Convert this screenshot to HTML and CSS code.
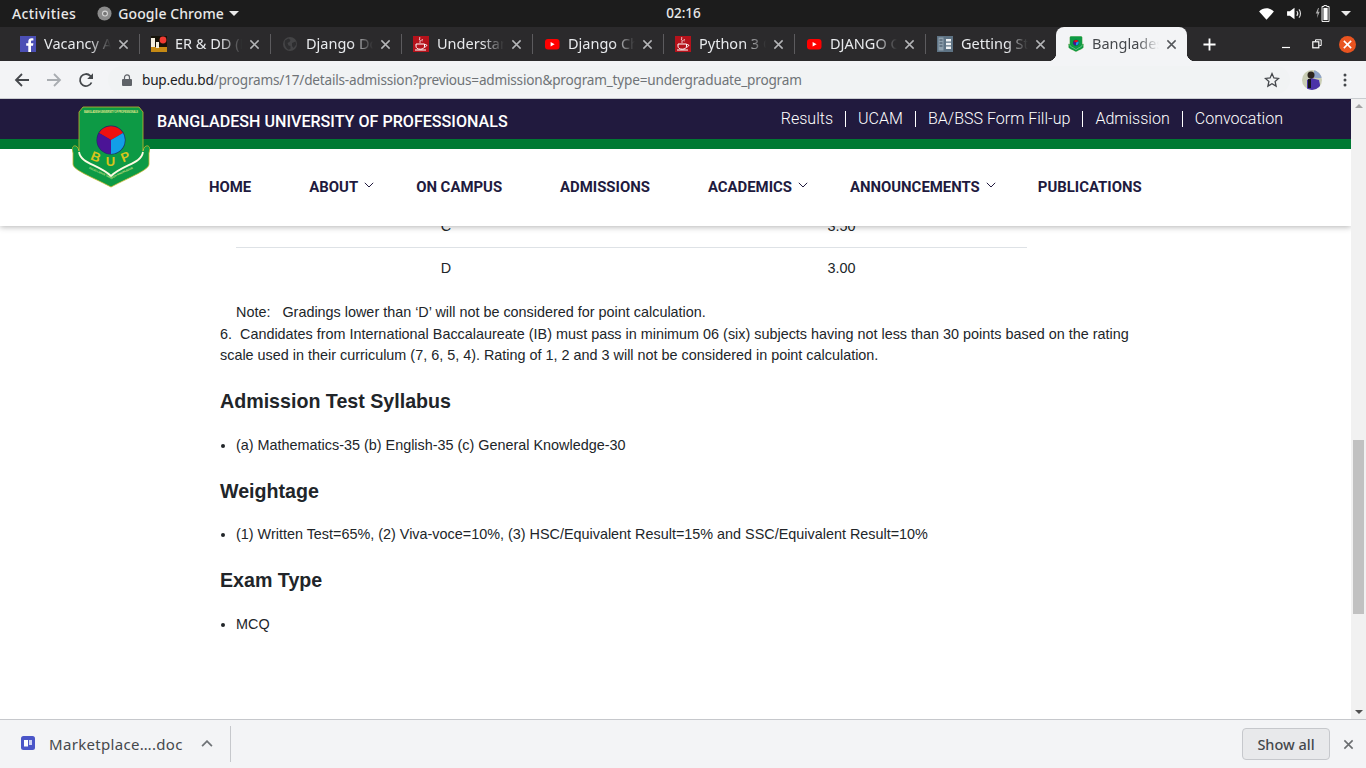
FILE: index.html
```html
<!DOCTYPE html>
<html lang="en">
<head>
<meta charset="utf-8">
<title>Bangladesh University of Professionals</title>
<link rel="stylesheet" href="styles.css">
</head>
<body>
<svg class="defs" width="0" height="0" aria-hidden="true">
  <symbol id="x" viewBox="0 0 12 12"><path d="M1.500 1.500l9 9M10.500 1.500l-9 9" fill="none" stroke="currentColor" stroke-width="1.600"/></symbol>
  <symbol id="yt" viewBox="0 0 16 16"><rect x="1" y="3" width="14.500" height="10.500" rx="3" fill="#f00"/><path d="M6.600 5.900v4.700l4-2.350z" fill="#fff"/></symbol>
  <symbol id="cup" viewBox="0 0 16 16"><rect width="16" height="16" fill="#b5121b"/><path d="M3 8h8.500v2.200c0 1.800-1.600 3-4.200 3S3 12 3 10.200zM11.500 8.600c2-.3 2.600.5 2 1.400-.5.700-1.400 1-2.400 1.100M2 14h11" fill="none" stroke="#fff" stroke-width="1"/><path d="M6.500 1.200c1.300 1-1 1.800.3 2.800s-.6 1.600.3 2.800M9 3c.8.700-.6 1.300.2 2.300" fill="none" stroke="#fff" stroke-width=".9"/></symbol>
  <symbol id="shield" viewBox="0 0 78 82">
    <path d="M11 1H67L71 6V45C72 39 77 38 78 43L77 47V58C77 64 60 70 39 81C18 70 1 64 1 58V47L0 43C1 38 6 39 7 45V6Z" fill="#0d9a45" stroke="#c8b52c" stroke-width=".8"/>
    <path d="M7 46C9 58 26 58 39 70C52 58 69 58 71 46" fill="none" stroke="#fdfbe2" stroke-width="1.800"/>
    <circle cx="39" cy="34" r="14.500" fill="#1f2a6a"/>
    <path d="M39 34L27 27A14 14 0 0 1 51 27Z" fill="#f01010"/>
    <path d="M39 34L51 27A14 14 0 0 1 39 48Z" fill="#129fe8"/>
    <path d="M39 34V48A14 14 0 0 1 27 27Z" fill="#4b1496"/>
  </symbol>
</svg>

<div class="topbar">
  <div class="topbar-left">
    <span class="activities">Activities</span>
    <span class="app">
      <svg class="app-icon" viewBox="0 0 16 16"><circle cx="8" cy="8" r="7.500" fill="#8b8b8b"/><circle cx="8.500" cy="8" r="3.200" fill="#d5d5d5"/><circle cx="8.500" cy="8" r="2" fill="#777"/></svg>
      Google Chrome
      <i class="caret"></i>
    </span>
  </div>
  <span class="clock">02:16</span>
  <div class="status">
    <svg class="st-wifi" viewBox="0 0 16 13"><path d="M0 3.800C4.500-.9 11.500-.9 16 3.800L8 12.800z" fill="#fff"/></svg>
    <svg class="st-vol" viewBox="0 0 16 14"><path d="M0 4.500h3L8 .8v12.400L3 9.500H0z" fill="#fff"/><path d="M10.500 4.300c1.200 1.500 1.200 3.900 0 5.400M12.800 2.500c2.200 2.500 2.200 6.500 0 9" fill="none" stroke="#ddd" stroke-width="1.200"/></svg>
    <svg class="st-bat" viewBox="0 0 16 18"><path d="M3.300 3L.8 9h2l-.8 5 3-7H3.200l1-4z" fill="#aaa"/><path d="M9.500 1.500V.5h3v1h2.500v16H7.500v-16z" fill="none" stroke="#fff" stroke-width="1"/><rect x="9" y="3" width="4.500" height="13" fill="#fff"/></svg>
    <i class="caret"></i>
  </div>
</div>

<div class="tabstrip">
  <div class="tab">
    <span class="sep sep-none"></span>
    <svg class="fav" viewBox="0 0 16 16"><rect width="16" height="16" fill="#4b4fb5"/><path d="M11 16V9.800h2l.4-2.500H11V5.800c0-.8.300-1.200 1.200-1.200h1.200V2.400C13 2.300 12.300 2.200 11.500 2.200 9.500 2.200 8.300 3.400 8.300 5.500v1.800H6.200v2.500h2.100V16z" fill="#fff"/></svg>
    <span class="tab-title">Vacancy Announcement</span>
    <svg class="close"><use href="#x"/></svg>
  </div>
  <div class="tab">
    <span class="sep"></span>
    <svg class="fav" viewBox="0 0 16 16"><rect width="16" height="16" fill="#161208"/><rect x="0" y="2" width="4" height="9" fill="#f4efe0"/><rect x="0" y="11" width="16" height="5" fill="#c68a14"/><rect x="5" y="6" width="3" height="6" fill="#f4efe0"/><circle cx="12" cy="4" r="3.400" fill="#ee3a32"/></svg>
    <span class="tab-title">ER &amp; DD (Entity</span>
    <svg class="close"><use href="#x"/></svg>
  </div>
  <div class="tab">
    <span class="sep"></span>
    <svg class="fav" viewBox="0 0 16 16"><circle cx="8" cy="8" r="7" fill="#444446"/><path d="M3 4.500l3.500-2 2 1.500-1 2-2 1 1 2.500 2 .5v3l-2 .8C4 12 2 9 3 4.500zM10 7l3.500-1.500.8 3L11.500 12 10 10z" fill="#2e2e30"/></svg>
    <span class="tab-title">Django Documentation</span>
    <svg class="close"><use href="#x"/></svg>
  </div>
  <div class="tab">
    <span class="sep"></span>
    <svg class="fav"><use href="#cup"/></svg>
    <span class="tab-title">Understanding</span>
    <svg class="close"><use href="#x"/></svg>
  </div>
  <div class="tab">
    <span class="sep"></span>
    <svg class="fav"><use href="#yt"/></svg>
    <span class="tab-title">Django Channels</span>
    <svg class="close"><use href="#x"/></svg>
  </div>
  <div class="tab">
    <span class="sep"></span>
    <svg class="fav"><use href="#cup"/></svg>
    <span class="tab-title">Python 3 Cookbook</span>
    <svg class="close"><use href="#x"/></svg>
  </div>
  <div class="tab">
    <span class="sep"></span>
    <svg class="fav"><use href="#yt"/></svg>
    <span class="tab-title">DJANGO CRUD</span>
    <svg class="close"><use href="#x"/></svg>
  </div>
  <div class="tab">
    <span class="sep"></span>
    <svg class="fav" viewBox="0 0 16 16"><rect width="16" height="16" fill="#5e7384"/><rect x="1.500" y="1.500" width="5" height="13" fill="#8ea0ad"/><path d="M9 3h5v2.500H9zM9 6.800h5v2.500H9zM9 10.600h5v2.500H9z" fill="#eef1f3"/><path d="M2.500 4h3M2.500 7h3M2.500 10h3" stroke="#39495a" stroke-width="1"/></svg>
    <span class="tab-title">Getting Started</span>
    <svg class="close"><use href="#x"/></svg>
  </div>
  <div class="tab tab-active">
    <span class="sep sep-none"></span>
    <svg class="fav"><use href="#shield"/></svg>
    <span class="tab-title">Bangladesh University</span>
    <svg class="close"><use href="#x"/></svg>
  </div>
  <svg class="newtab" viewBox="0 0 14 14"><path d="M7 .5v13M.5 7h13" stroke="#fff" stroke-width="2" fill="none"/></svg>
  <div class="winctl">
    <svg class="win-min" viewBox="0 0 10 10"><path d="M1 8.500h8" stroke="#fff" stroke-width="1.200"/></svg>
    <svg class="win-max" viewBox="0 0 10 10"><path d="M3.500 2.500V.8h5.700v5.700H7.300" fill="none" stroke="#fff" stroke-width="1"/><rect x=".8" y="2.800" width="6" height="6" fill="none" stroke="#fff" stroke-width="1.200"/></svg>
    <span class="win-close"><svg viewBox="0 0 12 12"><path d="M2 2l8 8M10 2l-8 8" stroke="#fff" stroke-width="1.700" fill="none"/></svg></span>
  </div>
</div>

<div class="toolbar">
  <svg class="nav-btn" viewBox="0 0 16 16"><path d="M15 8H2M8 2L2 8l6 6" fill="none" stroke="#45484c" stroke-width="1.800"/></svg>
  <svg class="nav-btn" viewBox="0 0 16 16"><path d="M1 8h13M8 2l6 6-6 6" fill="none" stroke="#a9adb1" stroke-width="1.800"/></svg>
  <svg class="nav-btn" viewBox="0 0 16 16"><path d="M13.500 10.500A6 6 0 1 1 12.300 3.800L14.500 6" fill="none" stroke="#45484c" stroke-width="1.800"/><path d="M15 1.200V7H9.200z" fill="#45484c"/></svg>
  <div class="omnibox">
    <svg class="lock" viewBox="0 0 10 12"><path d="M2.500 5V3.400a2.500 2.500 0 0 1 5 0V5" fill="none" stroke="#5f6368" stroke-width="1.200"/><rect y="5" width="10" height="7" rx="1" fill="#5f6368"/></svg>
    <span class="url"><b>bup.edu.bd</b>/programs/17/details-admission?previous=admission&amp;program_type=undergraduate_program</span>
    <svg class="star" viewBox="0 0 16 16"><path d="M8 1.600l1.900 4.300 4.700.5-3.500 3.100 1 4.600L8 11.700l-4.100 2.400 1-4.600L1.400 6.400l4.700-.5z" fill="none" stroke="#45484c" stroke-width="1.300"/></svg>
  </div>
  <svg class="avatar" viewBox="0 0 20 20"><defs><clipPath id="av"><circle cx="10" cy="10" r="10"/></clipPath></defs><g clip-path="url(#av)"><rect width="20" height="20" fill="#c9cdb4"/><rect x="12" y="0" width="8" height="8" fill="#8fa4c8"/><path d="M5 20V10l4-2 8 2 2 10z" fill="#4b33a8"/><circle cx="9" cy="5" r="3.500" fill="#2d241e"/><rect x="6" y="9" width="3" height="9" fill="#15151c"/></g></svg>
  <svg class="menu" viewBox="0 0 4 14"><circle cx="2" cy="2" r="1.500" fill="#45484c"/><circle cx="2" cy="7" r="1.500" fill="#45484c"/><circle cx="2" cy="12" r="1.500" fill="#45484c"/></svg>
</div>

<main class="viewport">
  <div class="page">
    <div class="content">
      <table class="grades">
        <tr><td>C</td><td>3.50</td></tr>
        <tr><td>D</td><td>3.00</td></tr>
      </table>
      <p class="note">Note:&nbsp;&nbsp; Gradings lower than ‘D’ will not be considered for point calculation.</p>
      <p class="para">6.&nbsp; Candidates from International Baccalaureate (IB) must pass in minimum 06 (six) subjects having not less than 30 points based on the rating scale used in their curriculum (7, 6, 5, 4). Rating of 1, 2 and 3 will not be considered in point calculation.</p>
      <h4>Admission Test Syllabus</h4>
      <ul><li>(a) Mathematics-35 (b) English-35 (c) General Knowledge-30</li></ul>
      <h4>Weightage</h4>
      <ul><li>(1) Written Test=65%, (2) Viva-voce=10%, (3) HSC/Equivalent Result=15% and SSC/Equivalent Result=10%</li></ul>
      <h4>Exam Type</h4>
      <ul><li>MCQ</li></ul>
    </div>
    <header class="site-header">
      <div class="band">
        <span class="uni">BANGLADESH UNIVERSITY OF PROFESSIONALS</span>
        <nav class="quick">
          <a>Results</a><a>UCAM</a><a>BA/BSS Form Fill-up</a><a>Admission</a><a>Convocation</a>
        </nav>
      </div>
      <div class="stripe"></div>
      <nav class="mainnav">
        <a>HOME</a>
        <a>ABOUT<svg class="chev" viewBox="0 0 10 6"><path d="M.8.8L5 5l4.200-4.200" fill="none" stroke="#211a3e" stroke-width="1"/></svg></a>
        <a>ON CAMPUS</a>
        <a>ADMISSIONS</a>
        <a>ACADEMICS<svg class="chev" viewBox="0 0 10 6"><path d="M.8.8L5 5l4.200-4.200" fill="none" stroke="#211a3e" stroke-width="1"/></svg></a>
        <a>ANNOUNCEMENTS<svg class="chev" viewBox="0 0 10 6"><path d="M.8.8L5 5l4.200-4.200" fill="none" stroke="#211a3e" stroke-width="1"/></svg></a>
        <a>PUBLICATIONS</a>
      </nav>
      <svg class="logo" viewBox="0 0 78 82">
        <use href="#shield" width="78" height="82"/>
        <defs><path id="motto" d="M9 59C20 64 30 68 39 73C48 68 58 64 69 59"/></defs>
        <text class="bup-letter" transform="translate(22 55) rotate(22)" text-anchor="middle">B</text>
        <text class="bup-letter" x="38.500" y="60" text-anchor="middle">U</text>
        <text class="bup-letter" transform="translate(55 55) rotate(-22)" text-anchor="middle">P</text>
        <text class="bup-tiny" x="39" y="7" text-anchor="middle" textLength="54">BANGLADESH UNIVERSITY OF PROFESSIONALS</text>
        <text class="bup-tiny"><textPath href="#motto" startOffset="50%" text-anchor="middle">EXCELLENCE THROUGH KNOWLEDGE</textPath></text>
      </svg>
    </header>
  </div>
  <div class="scrollbar">
    <i class="arrow-up"></i>
    <div class="track"><div class="thumb"></div></div>
    <i class="arrow-down"></i>
  </div>
</main>

<footer class="downloads">
  <svg class="doc-icon" viewBox="0 0 14 14"><rect width="14" height="14" rx="2.500" fill="#4a55c8"/><rect x="3" y="4" width="4" height="6.500" fill="#fff"/><rect x="8" y="4" width="3" height="5" fill="#cfd3f4"/></svg>
  <span class="doc-name">Marketplace….doc</span>
  <svg class="doc-chev" viewBox="0 0 10 6"><path d="M.8 5.200L5 1l4.200 4.200" fill="none" stroke="#6f7377" stroke-width="1.500"/></svg>
  <span class="doc-sep"></span>
  <button class="showall">Show all</button>
  <svg class="dl-close" viewBox="0 0 12 12"><path d="M1.500 1.500l9 9M10.500 1.500l-9 9" fill="none" stroke="#6a6d70" stroke-width="1.700"/></svg>
</footer>
</body>
</html>
```

FILE: styles.css
```css
* { box-sizing: border-box; }
html, body { margin: 0; height: 100%; }
body {
  width: 1366px;
  height: 768px;
  overflow: hidden;
  display: flex;
  flex-direction: column;
  font-family: "Liberation Sans", Arial, sans-serif;
  background: #fff;
}
.defs { display: block; height: 0; }

/* GNOME top bar */
.topbar {
  flex: 0 0 27px;
  background: #1c1c1c;
  color: #e9e9e9;
  display: grid;
  grid-template-columns: 1fr auto 1fr;
  align-items: center;
  font: 500 14px "Noto Sans", sans-serif;
  padding: 0 15px 0 12px;
}
.topbar-left { display: flex; align-items: center; }
.activities { margin-right: 21px; letter-spacing: .4px; }
.app { display: flex; align-items: center; gap: 6px; letter-spacing: .07px; }
.app-icon { width: 15px; height: 15px; }
.caret {
  width: 0; height: 0;
  border: 5px solid transparent;
  border-top: 5px solid #e9e9e9;
  border-bottom: 0;
  margin-left: -1px;
}
.clock { font-size: 13.500px; margin: -1px 0 0 4px; }
.status { display: flex; align-items: center; justify-content: flex-end; }
.st-wifi { width: 15px; height: 12px; }
.st-vol { width: 15px; height: 13px; margin-left: 13px; }
.st-bat { width: 15px; height: 17px; margin-left: 13px; margin-right: 11px; }
.status .caret { margin-left: 0; }

/* Tabs */
.tabstrip {
  flex: 0 0 34px;
  background: #2b2a2c;
  display: flex;
  align-items: stretch;
  padding-left: 8px;
}
.tab {
  flex: 0 0 131px;
  min-width: 0;
  display: flex;
  align-items: center;
  color: #e8eaed;
  font: 14.500px "Noto Sans", sans-serif;
  padding-right: 10px;
}
.sep { flex: 0 0 1px; height: 20px; background: #5c5b5e; margin-right: 11px; }
.sep-none { background: transparent; }
.fav { flex: 0 0 16px; width: 16px; height: 16px; }
.tab-title {
  flex: 1;
  min-width: 0;
  margin-left: 8px;
  margin-top: -2px;
  white-space: nowrap;
  overflow: hidden;
  -webkit-mask-image: linear-gradient(90deg, #000 68%, transparent 100%);
  mask-image: linear-gradient(90deg, #000 68%, transparent 100%);
}
.close { flex: 0 0 11px; width: 11px; height: 11px; color: #b4b5b7; margin-left: 7px; }
.tab-active {
  background: #f3f4f6;
  color: #45484c;
  border-radius: 8px 8px 0 0;
  position: relative;
}
.tab-active .close { color: #54575b; }
.tab-active::before, .tab-active::after {
  content: "";
  position: absolute;
  bottom: 0;
  width: 8px;
  height: 8px;
}
.tab-active::before { left: -8px; background: radial-gradient(circle at 0 0, transparent 8px, #f3f4f6 8.500px); }
.tab-active::after { right: -8px; background: radial-gradient(circle at 100% 0, transparent 8px, #f3f4f6 8.500px); }
.newtab { width: 13px; height: 13px; align-self: center; margin-left: 16px; }
.winctl { display: flex; align-items: center; margin-left: 65px; }
.win-min { width: 10px; height: 10px; }
.win-max { width: 10px; height: 10px; margin-left: 21px; }
.win-close {
  width: 17px; height: 17px;
  border-radius: 50%;
  background: #e95420;
  margin-left: 17px;
  display: flex;
  align-items: center;
  justify-content: center;
}
.win-close svg { width: 11px; height: 11px; }

/* Toolbar */
.toolbar {
  flex: 0 0 38px;
  background: #f3f4f6;
  border-bottom: 1px solid #c9ccd0;
  display: flex;
  align-items: center;
  padding: 0 0 0 14px;
}
.nav-btn { width: 16px; height: 16px; margin-right: 16px; }
.nav-btn:nth-of-type(3) { margin-right: 14px; }
.omnibox {
  flex: 0 0 1182px;
  height: 28px;
  border-radius: 14px;
  background: #f1f3f4;
  display: flex;
  align-items: center;
  padding: 0 10px 0 14px;
}
.lock { width: 10px; height: 12px; margin-right: 10px; }
.url {
  flex: 1;
  color: #6f7377;
  font: 13.600px "Noto Sans", sans-serif;
  letter-spacing: -.2px;
  white-space: nowrap;
  margin-top: -1px;
}
.url b { font-weight: 400; color: #202124; }
.star { width: 16px; height: 16px; }
.avatar { width: 20px; height: 20px; margin-left: 12px; }
.menu { width: 4px; height: 14px; margin-left: 21px; }

/* Page */
.viewport { flex: 1; min-height: 0; display: flex; }
.page { flex: 1; min-width: 0; position: relative; overflow: hidden; background: #fff; }
.content {
  padding: 105px 0 0 220px;
  width: 1150px;
  color: #212529;
  font-size: 14.400px;
  line-height: 21px;
}
.grades { width: 791px; margin-left: 16px; border-collapse: collapse; table-layout: fixed; }
.grades td { height: 40px; padding: 2px 0 0; text-align: center; vertical-align: middle; }
.grades td:first-child { width: 420px; }
.grades tr:first-child td { border-bottom: 1px solid #dee2e6; height: 43px; }
.note { margin: 15px 0 0 16px; }
.para { margin: 1px 0 0; }
h4 {
  font-size: 19.650px;
  line-height: 24px;
  font-weight: 700;
  margin: 23px 0 0;
}
ul { margin: 21.500px 0 0; padding-left: 16px; }
h4 + ul + h4 { margin-top: 23px; }
li { margin: 0; }

/* Site header */
.site-header {
  position: absolute;
  top: 0; left: 0; right: 0;
  background: #fff;
  box-shadow: 0 1px 6px rgba(0, 0, 0, .3);
  font-family: Roboto, sans-serif;
}
.band {
  height: 40px;
  background: #211a3e;
  color: #fff;
  display: flex;
  justify-content: space-between;
  padding: 0 68px 0 157px;
}
.uni { font-size: 16.100px; font-weight: 500; line-height: 45px; }
.quick { display: flex; align-items: center; height: 39px; font-size: 16.050px; font-weight: 300; }
.quick a { padding: 0 12px; line-height: 16px; border-left: 1px solid #fff; }
.quick a:first-child { border-left: 0; }
.quick a:last-child { padding-right: 0; }
.stripe { height: 10px; background: #007a33; }
.mainnav {
  height: 77px;
  display: flex;
  align-items: center;
  padding-left: 180px;
  color: #211a3e;
  font-size: 14.920px;
  font-weight: 700;
}
.mainnav a { padding: 0 29px; display: flex; align-items: center; white-space: nowrap; margin-top: -2px; }
.chev { width: 10px; height: 6px; margin: -3px -16px 0 6px; }
.logo { position: absolute; left: 72px; top: 7px; width: 78px; height: 82px; }
.bup-letter { font: 700 13px "Liberation Sans", sans-serif; fill: #d9c41c; }
.bup-tiny { font: 700 2.600px "Liberation Sans", sans-serif; fill: #dfe48a; }

/* Scrollbar */
.scrollbar {
  flex: 0 0 15px;
  background: #f1f1f1;
  display: flex;
  flex-direction: column;
  align-items: center;
}
.track { flex: 1; width: 100%; padding: 327px 2px 0; }
.thumb { height: 174px; background: #c1c1c1; }
.arrow-up, .arrow-down { width: 0; height: 0; border: 4px solid transparent; margin: 5px 0; }
.arrow-up { border-bottom: 4px solid #a3a3a3; border-top: 0; }
.arrow-down { border-top: 4px solid #505050; border-bottom: 0; }

/* Download bar */
.downloads {
  flex: 0 0 49px;
  background: #f3f4f6;
  border-top: 1px solid #c6c8cc;
  display: flex;
  align-items: center;
  padding: 0 0 0 21px;
  color: #45484c;
  font: 15px "Noto Sans", sans-serif;
}
.doc-icon { width: 14px; height: 14px; margin-top: -2px; }
.doc-name { margin-left: 14px; width: 152px; white-space: nowrap; letter-spacing: .32px; }
.doc-chev { width: 12px; height: 7px; margin-top: -2px; }
.doc-sep { width: 1px; height: 36px; background: #c6c8cc; margin-left: 17px; }
.showall {
  width: 88px;
  height: 32px;
  margin-left: 1011px;
  border: 1px solid #c6c8cc;
  border-radius: 4px;
  background: #e8e9eb;
  color: #45484c;
  font: 500 14.500px "Noto Sans", sans-serif;
  padding: 0;
}
.dl-close { width: 11px; height: 11px; margin-left: 13px; }
```
